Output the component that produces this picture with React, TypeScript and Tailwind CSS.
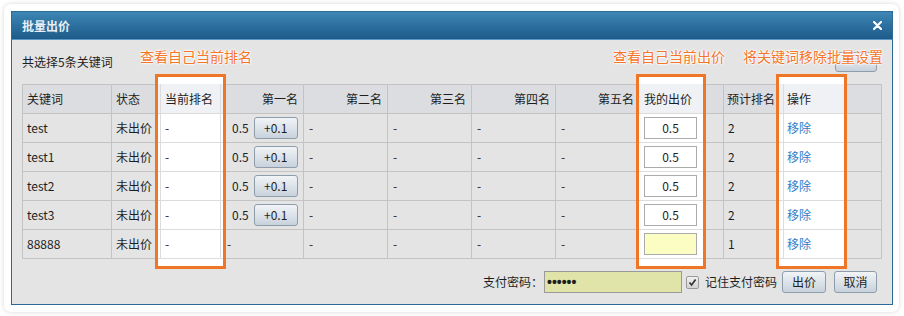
import React from 'react'

// ── Data ───────────────────────────────────────────────────────────────────────

type Row = { kw: string; bid: string; est: string; hasFirst: boolean }

const ROWS: Row[] = [
  { kw: 'test', bid: '0.5', est: '2', hasFirst: true },
  { kw: 'test1', bid: '0.5', est: '2', hasFirst: true },
  { kw: 'test2', bid: '0.5', est: '2', hasFirst: true },
  { kw: 'test3', bid: '0.5', est: '2', hasFirst: true },
  { kw: '88888', bid: '', est: '1', hasFirst: false },
]

const BTN =
  'flex items-center justify-center rounded-[3px] border border-[#8e9dac] bg-linear-to-b from-[#f1f4f7] to-[#c8d2dc] text-[12px] text-[#1e1e1e]'

// ── Header row ─────────────────────────────────────────────────────────────────

function HeaderRow() {
  return (
    <div className="flex h-[30px]">
      <div className="w-[90px] border border-[#c3c3c3] bg-[#dcdde0] flex items-center pl-[4px]">关键词</div>
      <div className="w-[43px] border-y border-[#c3c3c3] bg-[#dcdde0] flex items-center pl-[4px]">状态</div>

      {/* 当前排名 (highlighted) */}
      <div className="w-[71px] flex flex-col">
        <div className="mx-[3px] flex-1 bg-[#eff1f5] border-b border-[#dcdcdc] flex">
          <div className="mx-[2px] flex-1 border-x border-[#dcdcdc] flex items-center pl-[4px]">当前排名</div>
        </div>
      </div>

      <div className="w-[78px] border-y border-r border-[#c3c3c3] bg-[#dcdde0] flex items-center justify-end pr-[5px]">第一名</div>
      <div className="w-[84px] border-y border-r border-[#c3c3c3] bg-[#dcdde0] flex items-center justify-end pr-[5px]">第二名</div>
      <div className="w-[84px] border-y border-r border-[#c3c3c3] bg-[#dcdde0] flex items-center justify-end pr-[5px]">第三名</div>
      <div className="w-[84px] border-y border-r border-[#c3c3c3] bg-[#dcdde0] flex items-center justify-end pr-[5px]">第四名</div>
      <div className="w-[80px] border-y border-[#c3c3c3] bg-[#dcdde0] flex items-center justify-end pr-[2px]">第五名</div>

      {/* 我的出价 (highlighted) */}
      <div className="w-[70px] flex flex-col">
        <div className="mx-[3px] flex-1 bg-[#eff1f5] border-b border-[#dcdcdc] flex items-center pl-[5px]">我的出价</div>
      </div>
      <div className="w-[18px] border-y border-r border-[#c3c3c3] bg-[#dcdde0]" />

      <div className="w-[52px] border-y border-[#c3c3c3] bg-[#dcdde0] flex items-center pl-[3px]">预计排名</div>

      {/* 操作 (highlighted) */}
      <div className="w-[71px] flex flex-col">
        <div className="mx-[3px] flex-1 bg-[#eff1f5] border-b border-[#dcdcdc] flex">
          <div className="ml-[4px] flex-1 border-l border-[#dcdcdc] flex items-center pl-[3px]">操作</div>
        </div>
      </div>
      <div className="w-[35px] border-y border-r border-[#c3c3c3] bg-[#dcdde0]" />
    </div>
  )
}

// ── Body row ───────────────────────────────────────────────────────────────────

function BodyRow({ row }: { row: Row }) {
  return (
    <div className="flex h-[29px]">
      <div className="w-[90px] border-x border-b border-[#c3c3c3] flex items-center pl-[4px]">{row.kw}</div>
      <div className="w-[43px] border-b border-[#c3c3c3] flex items-center pl-[4px]">未出价</div>

      <div className="w-[71px] flex flex-col">
        <div className="mx-[3px] flex-1 bg-white border-b border-[#dcdcdc] flex">
          <div className="mx-[2px] flex-1 border-x border-[#dcdcdc] flex items-center pl-[4px]">-</div>
        </div>
      </div>

      {row.hasFirst ? (
        <div className="w-[78px] border-b border-r border-[#c3c3c3] flex items-center pl-[6px]">
          <span>0.5</span>
          <button className={`${BTN} ml-[5px] w-[44px] h-[22px]`}>+0.1</button>
        </div>
      ) : (
        <div className="w-[78px] border-b border-r border-[#c3c3c3] flex items-center pl-[1px]">-</div>
      )}
      <div className="w-[84px] border-b border-r border-[#c3c3c3] flex items-center pl-[5px]">-</div>
      <div className="w-[84px] border-b border-r border-[#c3c3c3] flex items-center pl-[5px]">-</div>
      <div className="w-[84px] border-b border-r border-[#c3c3c3] flex items-center pl-[5px]">-</div>
      <div className="w-[80px] border-b border-[#c3c3c3] flex items-center pl-[5px]">-</div>

      <div className="w-[70px] flex flex-col">
        <div className="mx-[3px] flex-1 bg-white border-b border-[#dcdcdc] flex items-center pl-[5px]">
          <div
            className={`w-[53px] h-[22px] border border-[#ababab] flex items-center justify-center ${
              row.bid ? 'bg-white' : 'bg-[#fbfdc2]'
            }`}
          >
            {row.bid}
          </div>
        </div>
      </div>
      <div className="w-[18px] border-b border-r border-[#c3c3c3]" />

      <div className="w-[52px] border-b border-[#c3c3c3] flex items-center pl-[4px]">{row.est}</div>

      <div className="w-[71px] flex flex-col">
        <div className="mx-[3px] flex-1 bg-white border-b border-[#dcdcdc] flex">
          <div className="ml-[4px] flex-1 border-l border-[#dcdcdc] flex items-center pl-[3px] text-[#2f7bc9]">移除</div>
        </div>
      </div>
      <div className="w-[35px] border-b border-r border-[#c3c3c3]" />
    </div>
  )
}

// ── Annotation note ────────────────────────────────────────────────────────────

const NOTE =
  "absolute top-[9px] z-20 text-[14px] leading-[15px] text-[#f4762a] whitespace-nowrap [text-shadow:0_0_2px_#fff,0_0_2px_#fff,0_0_2px_#fff,0_0_3px_#fff]"

// ── App ────────────────────────────────────────────────────────────────────────

export default function App() {
  return (
    <div className="w-[904px] h-[316px] bg-white pt-[4px] pl-[4px] font-['Noto_Sans_CJK_SC','Noto_Sans',sans-serif] text-[12px] text-[#1e1e1e]">
      <div className="w-[895px] h-[308px] rounded-[7px] bg-white shadow-[0_0_5px_rgba(0,0,0,0.16)] pt-[7px] pl-[7px]">
        {/* Dialog */}
        <div className="w-[882px] h-[294px] border border-[#2d6996] flex flex-col bg-[#e4e4e4]">
          {/* Title bar */}
          <div className="h-[28px] shrink-0 bg-linear-to-b from-[#3d86b5] to-[#1d5b8a] border-b border-[#5b98c3] flex items-center justify-between pl-[10px] pr-[10px]">
            <span className="text-[12px] font-bold text-[#e9eff5]">批量出价</span>
            <svg width="9" height="9" viewBox="0 0 9 9">
              <path d="M1 1 L8 8 M8 1 L1 8" stroke="#ffffff" strokeWidth="2.2" strokeLinecap="round" />
            </svg>
          </div>

          {/* Body */}
          <div className="relative flex-1 px-[10px]">
            {/* highlight frames behind the table */}
            <div className="absolute z-0 left-[143px] top-[34px] w-[71px] h-[195px] bg-white border-[3px] border-[#f07627]" />
            <div className="absolute z-0 left-[624px] top-[34px] w-[70px] h-[195px] bg-white border-[3px] border-[#f07627]" />
            <div className="absolute z-0 left-[764px] top-[34px] w-[71px] h-[195px] bg-white border-[3px] border-[#f07627]" />

            {/* notes */}
            <div className={`${NOTE} left-[128px]`}>查看自己当前排名</div>
            <div className={`${NOTE} left-[601px]`}>查看自己当前出价</div>
            <div className={`${NOTE} left-[731px]`}>将关键词移除批量设置</div>

            <div className="h-[44px] flex items-center justify-between">
              <span>共选择5条关键词</span>
              {/* button whose label is hidden under the note */}
              <div className={`${BTN} mr-[5px] w-[42px] h-[20px]`} />
            </div>

            <div className="relative z-10">
              <HeaderRow />
              {ROWS.map((r) => (
                <BodyRow key={r.kw} row={r} />
              ))}
            </div>

            {/* Footer */}
            <div className="mt-[12px] h-[22px] flex items-center justify-end pr-[5px]">
              <span>支付密码：</span>
              <div className="ml-[1px] w-[138px] h-[22px] bg-[#e0e4a9] border border-[#9a9a9a] flex items-center pl-[2px] font-['Liberation_Sans',sans-serif] text-[14px] font-bold leading-none">
                ••••••
              </div>
              <div className="ml-[4px] w-[13px] h-[13px] rounded-[2px] border border-[#9a9a9a] bg-linear-to-b from-[#f0f0f0] to-[#d4d4d4] flex items-center justify-center">
                <svg width="9" height="9" viewBox="0 0 9 9">
                  <path d="M1.5 4.5 L3.6 7 L7.6 1.6" stroke="#333" strokeWidth="1.7" fill="none" />
                </svg>
              </div>
              <span className="ml-[6px]">记住支付密码</span>
              <button className={`${BTN} ml-[5px] w-[44px] h-[22px]`}>出价</button>
              <button className={`${BTN} ml-[8px] w-[43px] h-[22px]`}>取消</button>
            </div>
          </div>
        </div>
      </div>
    </div>
  )
}
